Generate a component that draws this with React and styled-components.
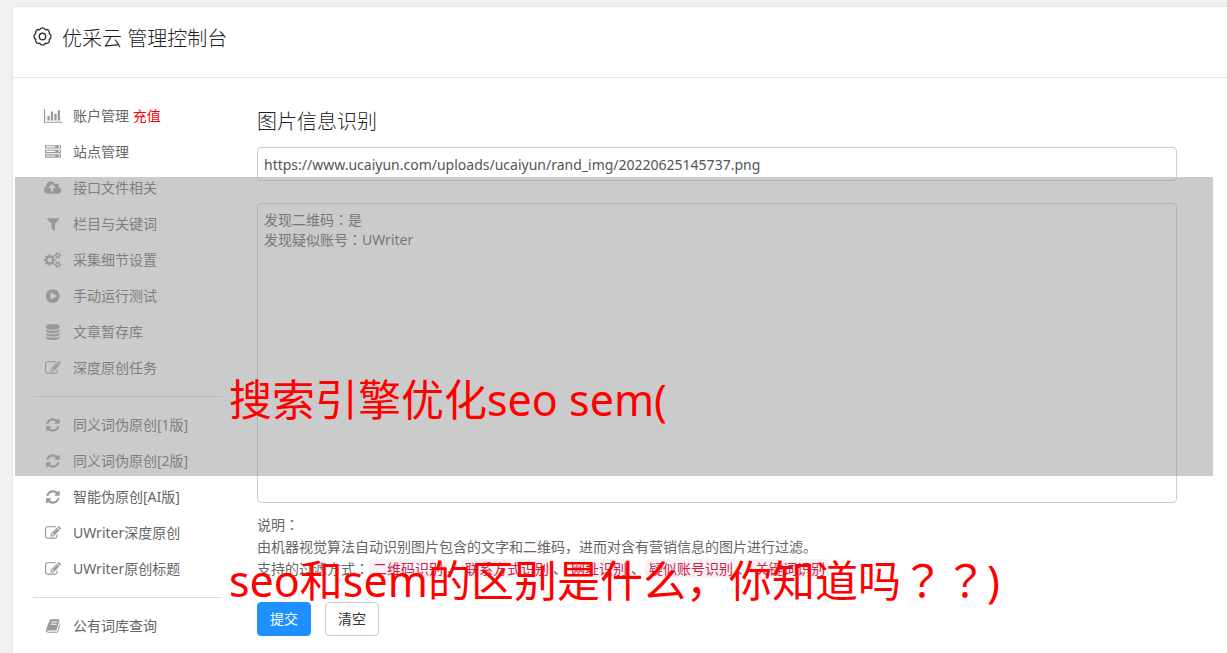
import React from "react";
import styled, { createGlobalStyle } from "styled-components";

const ICONS = {
	chart: {
		box: "0 0 2048 1792",
		d: "M640 896v512h-256v-512h256zm384-512v1024h-256v-1024h256zm1024 1152v128h-2048v-1536h128v1408h1920zm-640-896v768h-256v-768h256zm384-384v1152h-256v-1152h256z",
	},
	server: {
		box: "0 0 1792 1792",
		d: "M128 1408h1024v-128h-1024v128zm0-512h1024v-128h-1024v128zm1568 448q0-40-28-68t-68-28-68 28-28 68 28 68 68 28 68-28 28-68zm-1568-960h1024v-128h-1024v128zm1568 448q0-40-28-68t-68-28-68 28-28 68 28 68 68 28 68-28 28-68zm0-512q0-40-28-68t-68-28-68 28-28 68 28 68 68 28 68-28 28-68zm96 832v384h-1792v-384h1792zm0-512v384h-1792v-384h1792zm0-512v384h-1792v-384h1792z",
	},
	upload: {
		box: "-64 0 1920 1792",
		d: "M1216 864q0-14-9-23l-352-352q-9-9-23-9t-23 9l-351 351q-10 12-10 24 0 14 9 23t23 9h224v352q0 13 9.5 22.5t22.5 9.5h192q13 0 22.5-9.5t9.5-22.5v-352h224q13 0 22.5-9.5t9.5-22.5zm640 288q0 159-112.5 271.5t-271.5 112.5h-1088q-185 0-316.5-131.5t-131.5-316.5q0-130 70-240t188-165q-2-30-2-43 0-212 150-362t362-150q156 0 285.5 87t188.5 231q71-62 166-62 106 0 181 75t75 181q0 76-41 138 130 31 213.5 135.5t83.5 238.5z",
	},
	filter: {
		box: "192 0 1408 1792",
		d: "M1595 295q17 41-14 70l-493 493v742q0 42-39 59-13 5-25 5-27 0-45-19l-256-256q-19-19-19-45v-486l-493-493q-31-29-14-70 17-39 59-39h1280q42 0 59 39z",
	},
	cogs: {
		box: "-64 0 1920 1792",
		d: "M832 896q0-106-75-181t-181-75-181 75-75 181 75 181 181 75 181-75 75-181zm768 512q0-52-38-90t-90-38-90 38-38 90q0 53 37.5 90.5t90.5 37.5 90.5-37.5 37.5-90.5zm0-1024q0-52-38-90t-90-38-90 38-38 90q0 53 37.5 90.5t90.5 37.5 90.5-37.5 37.5-90.5zm-384 421v185q0 10-7 19.5t-16 10.5l-155 24q-11 35-32 76 34 48 90 115 7 11 7 20 0 12-7 19-23 30-82.5 89.5t-78.5 59.5q-11 0-21-7l-115-90q-37 19-77 31-11 108-23 155-7 24-30 24h-186q-11 0-20-7.5t-10-17.5l-23-153q-34-10-75-31l-118 89q-7 7-20 7-11 0-21-8-144-133-144-160 0-9 7-19 10-14 41-53t47-61q-23-44-35-82l-152-24q-10-1-17-9.5t-7-19.5v-185q0-10 7-19.5t16-10.5l155-24q11-35 32-76-34-48-90-115-7-11-7-20 0-12 7-20 22-30 82-89t79-59q11 0 21 7l115 90q34-18 77-32 11-108 23-154 7-24 30-24h186q11 0 20 7.5t10 17.5l23 153q34 10 75 31l118-89q8-7 20-7 11 0 21 8 144 133 144 160 0 8-7 19-12 16-42 54t-45 60q23 48 34 82l152 23q10 2 17 10.5t7 19.5zm640 533v140q0 16-149 31-12 27-30 52 51 113 51 138 0 4-4 7-122 71-124 71-8 0-46-47t-52-68q-20 2-30 2t-30-2q-14 21-52 68t-46 47q-2 0-124-71-4-3-4-7 0-25 51-138-18-25-30-52-149-15-149-31v-140q0-16 149-31 13-29 30-52-51-113-51-138 0-4 4-7 4-2 35-20t59-34 30-16q8 0 46 46.5t52 67.5q20-2 30-2t30 2q51-71 92-112l6-2q4 0 124 70 4 3 4 7 0 25-51 138 17 23 30 52 149 15 149 31zm0-1024v140q0 16-149 31-12 27-30 52 51 113 51 138 0 4-4 7-122 71-124 71-8 0-46-47t-52-68q-20 2-30 2t-30-2q-14 21-52 68t-46 47q-2 0-124-71-4-3-4-7 0-25 51-138-18-25-30-52-149-15-149-31v-140q0-16 149-31 13-29 30-52-51-113-51-138 0-4 4-7 4-2 35-20t59-34 30-16q8 0 46 46.5t52 67.5q20-2 30-2t30 2q51-71 92-112l6-2q4 0 124 70 4 3 4 7 0 25-51 138 17 23 30 52 149 15 149 31z",
	},
	play: {
		box: "128 0 1536 1792",
		d: "M896 128q209 0 385.5 103t279.5 279.5 103 385.5-103 385.5-279.5 279.5-385.5 103-385.5-103-279.5-279.5-103-385.5 103-385.5 279.5-279.5 385.5-103zm384 823q32-18 32-55t-32-55l-544-320q-31-19-64-1-32 19-32 56v640q0 37 32 56 16 8 32 8 17 0 32-9z",
	},
	database: {
		box: "128 0 1536 1792",
		d: "M896 768q237 0 443-43t325-127v170q0 69-103 128t-280 93.5-385 34.5-385-34.5-280-93.5-103-128v-170q119 84 325 127t443 43zm0 768q237 0 443-43t325-127v170q0 69-103 128t-280 93.5-385 34.5-385-34.5-280-93.5-103-128v-170q119 84 325 127t443 43zm0-384q237 0 443-43t325-127v170q0 69-103 128t-280 93.5-385 34.5-385-34.5-280-93.5-103-128v-170q119 84 325 127t443 43zm0-1152q208 0 385 34.5t280 93.5 103 128v128q0 69-103 128t-280 93.5-385 34.5-385-34.5-280-93.5-103-128v-128q0-69 103-128t280-93.5 385-34.5z",
	},
	edit: {
		box: "0 0 1792 1792",
		d: "M888 1184l116-116-152-152-116 116v56h96v96h56zm440-720q-16-16-33 1l-350 350q-17 17-1 33t33-1l350-350q17-17 1-33zm80 594v190q0 119-84.5 203.5t-203.5 84.5h-832q-119 0-203.5-84.5t-84.5-203.5v-832q0-119 84.5-203.5t203.5-84.5h832q63 0 117 25 15 7 18 23 3 17-9 29l-49 49q-14 14-32 8-23-6-45-6h-832q-66 0-113 47t-47 113v832q0 66 47 113t113 47h832q66 0 113-47t47-113v-126q0-13 9-22l64-64q15-15 35-7t20 29zm-96-738l288 288-672 672h-288v-288zm444 132l-92 92-288-288 92-92q28-28 68-28t68 28l152 152q28 28 28 68t-28 68z",
	},
	refresh: {
		box: "128 0 1536 1792",
		d: "M1639 1056q0 5-1 7-64 268-268 434.5t-478 166.5q-146 0-282.5-55t-243.5-157l-129 129q-19 19-45 19t-45-19-19-45v-448q0-26 19-45t45-19h448q26 0 45 19t19 45-19 45l-137 137q71 66 161 102t187 36q134 0 250-65t186-179q11-17 53-117 8-23 30-23h192q13 0 22.5 9.5t9.5 22.5zm25-800v448q0 26-19 45t-45 19h-448q-26 0-45-19t-19-45 19-45l138-138q-148-137-349-137-134 0-250 65t-186 179q-11 17-53 117-8 23-30 23h-199q-13 0-22.5-9.5t-9.5-22.5v-7q65-268 270-434.5t480-166.5q146 0 284 55.5t245 156.5l130-129q19-19 45-19t45 19 19 45z",
	},
	book: {
		box: "64 0 1664 1792",
		d: "M1703 478q40 57 18 129l-275 906q-19 64-76.5 107.5t-122.5 43.5h-923q-77 0-148.5-53.5t-99.5-131.5q-24-67-2-127 0-4 3-27t4-37q1-8-3-21.5t-3-19.5q2-11 8-21t16.5-23.5 16.5-23.5q23-38 45-91.5t30-91.5q3-10 .5-30t-.5-28q3-11 17-28t17-23q21-36 42-92t25-90q1-9-2.5-32t.5-28q4-13 22-30.5t22-22.5q19-26 42.5-84.5t27.5-96.5q1-8-3-25.5t-2-26.5q2-8 9-18t18-23 17-21q8-12 16.5-30.5t15-35 16-36 19.5-32 26.5-23.5 36-11.5 47.5 5.5l-1 3q38-9 51-9h761q74 0 114 56t18 130l-274 906q-36 119-71.5 153.5t-128.5 34.5h-869q-27 0-38 15-11 16-1 43 24 70 144 70h923q29 0 56-15.5t35-41.5l300-987q7-22 5-57 38 15 59 43zm-1064 2q-4 13 2 22.5t20 9.5h608q13 0 25.5-9.5t16.5-22.5l21-64q4-13-2-22.5t-20-9.5h-608q-13 0-25.5 9.5t-16.5 22.5zm-83 256q-4 13 2 22.5t20 9.5h608q13 0 25.5-9.5t16.5-22.5l21-64q4-13-2-22.5t-20-9.5h-608q-13 0-25.5 9.5t-16.5 22.5z",
	},
};

const MENU = [
	[
		{ icon: "chart", text: "账户管理", extra: "充值" },
		{ icon: "server", text: "站点管理" },
		{ icon: "upload", text: "接口文件相关" },
		{ icon: "filter", text: "栏目与关键词" },
		{ icon: "cogs", text: "采集细节设置" },
		{ icon: "play", text: "手动运行测试" },
		{ icon: "database", text: "文章暂存库" },
		{ icon: "edit", text: "深度原创任务" },
	],
	[
		{ icon: "refresh", text: "同义词伪原创[1版]" },
		{ icon: "refresh", text: "同义词伪原创[2版]" },
		{ icon: "refresh", text: "智能伪原创[AI版]" },
		{ icon: "edit", text: "UWriter深度原创" },
		{ icon: "edit", text: "UWriter原创标题" },
	],
	[{ icon: "book", text: "公有词库查询" }],
];

const FILTERS = ["二维码识别", "联系方式识别", "网址识别", "疑似账号识别", "关键词识别"];

// full-width marks that sit in the middle of their cell
const withMarks = (text) =>
	text.split(/([：？]+)/).map((part, index) =>
		index % 2 ? <Mark key={index} lang="zh-TW">{part}</Mark> : part
	);

const MenuIcon = ({ name }) => (
	<IconSlot>
		<svg viewBox={ICONS[name].box} height="16" fill="currentColor" aria-hidden="true">
			<path d={ICONS[name].d} />
		</svg>
	</IconSlot>
);

const GearIcon = () => (
	<svg width="19" height="19" viewBox="-10 -10 20 20" fill="none" stroke="currentColor" strokeWidth="1.4" strokeLinejoin="round" aria-hidden="true">
		<path d="M-2.9-7.02A3.1 3.1 0 0 1 2.9-7.02A3.1 3.1 0 0 1 7.02-2.9A3.1 3.1 0 0 1 7.02 2.9A3.1 3.1 0 0 1 2.9 7.02A3.1 3.1 0 0 1-2.9 7.02A3.1 3.1 0 0 1-7.02 2.9A3.1 3.1 0 0 1-7.02-2.9A3.1 3.1 0 0 1-2.9-7.02z" />
		<circle r="3.4" />
	</svg>
);

const App = () => {
	return (
		<>
			<GlobalStyle />
			<Page lang="zh-CN">
				<Card>
					<Header>
						<GearIcon />
						<Brand>优采云 管理控制台</Brand>
					</Header>
					<Columns>
						<Sidebar>
							{MENU.map((group, index) => (
								<Group key={index}>
									{group.map((item) => (
										<li key={item.text}>
											<MenuLink href="#">
												<MenuIcon name={item.icon} />
												<span>
													{item.text} {item.extra && <Extra>{item.extra}</Extra>}
												</span>
											</MenuLink>
										</li>
									))}
								</Group>
							))}
						</Sidebar>
						<Content>
							<Title>图片信息识别</Title>
							<UrlInput
								type="text"
								aria-label="图片地址"
								defaultValue="https://www.ucaiyun.com/uploads/ucaiyun/rand_img/20220625145737.png"
							/>
							<ResultBox
								lang="zh-TW"
								aria-label="识别结果"
								defaultValue={"发现二维码：是\n发现疑似账号：UWriter"}
							/>
							<Notes>
								{withMarks("说明：")}
								<br />
								由机器视觉算法自动识别图片包含的文字和二维码，进而对含有营销信息的图片进行过滤。
								<br />
								{withMarks("支持的过滤方式：")}
								{FILTERS.map((filter, index) => (
									<React.Fragment key={filter}>
										{index > 0 && "、"}
										<Tag>{filter}</Tag>
									</React.Fragment>
								))}
							</Notes>
							<Buttons>
								<Button $primary type="submit">提交</Button>
								<Button type="reset">清空</Button>
							</Buttons>
						</Content>
					</Columns>
				</Card>
				<Shade />
				<Caption $top={370}>搜索引擎优化seo sem(</Caption>
				<Caption $top={551}>{withMarks("seo和sem的区别是什么，你知道吗？？)")}</Caption>
			</Page>
		</>
	);
};

export default App;

const GlobalStyle = createGlobalStyle`
	* {
		box-sizing: border-box;
	}

	body {
		margin: 0;
		background-color: #f1f1f1;
		color: #666;
		font-family: "Noto Sans", "Noto Sans CJK SC", sans-serif;
		font-size: 14px;
		line-height: 20px;
	}

	input, textarea, button {
		font: inherit;
	}
`;

const Page = styled.div`
	position: relative;
	padding: 6px 0 0 12px;
`;

const Card = styled.div`
	min-height: calc(100vh - 6px);
	background-color: #fff;
	border: 1px solid #e5e5e5;
	border-width: 1px 0 0 1px;
	border-radius: 4px 0 0 0;
`;

const Header = styled.header`
	display: flex;
	align-items: flex-start;
	gap: 10px;
	height: 71px;
	padding: 20px;
	border-bottom: 1px solid #e5e5e5;
	color: #333;
`;

const Brand = styled.h1`
	margin: 0;
	color: #222;
	font-size: 20px;
	font-weight: 300;
	line-height: 24px;
`;

const Columns = styled.div`
	display: flex;
	gap: 35px;
	padding: 20px 50px 0 20px;
`;

const Sidebar = styled.nav`
	flex: 0 0 189px;
`;

const Group = styled.ul`
	list-style: none;
	margin: 0;
	padding: 0;

	& + & {
		margin-top: 10px;
		padding-top: 10px;
		border-top: 1px solid #ddd;
	}
`;

const MenuLink = styled.a`
	display: flex;
	align-items: center;
	gap: 10px;
	height: 36px;
	padding-left: 10px;
	color: #666;
	text-decoration: none;
`;

const IconSlot = styled.span`
	display: flex;
	justify-content: center;
	width: 20px;
	color: #999;
`;

const Extra = styled.span`
	color: #f00;
`;

const Content = styled.main`
	flex: 1;
	min-width: 0;
	display: flex;
	flex-direction: column;
`;

const Title = styled.h2`
	margin: 10px 0 12px;
	color: #222;
	font-size: 20px;
	font-weight: 300;
	line-height: 27px;
`;

const UrlInput = styled.input`
	height: 34px;
	padding: 6px;
	border: 1px solid #ccc;
	border-radius: 4px;
	background-color: #fff;
	color: #555;
`;

const ResultBox = styled.textarea`
	height: 300px;
	margin-top: 22px;
	padding: 6px;
	border: 1px solid #ccc;
	border-radius: 4px;
	background-color: #fff;
	color: #555;
	font-family: "Noto Sans", "Noto Sans CJK TC", sans-serif;
	resize: none;
`;

const Notes = styled.p`
	margin: 11px 0 22px;
	line-height: 22px;
`;

const Mark = styled.span`
	font-family: "Noto Sans CJK TC", sans-serif;
	line-height: 0;
`;

const Tag = styled.code`
	padding: 0 4px;
	border-radius: 4px;
	background-color: #f9f2f4;
	color: #c7254e;
	font-family: inherit;
`;

const Buttons = styled.div`
	display: flex;
	gap: 14px;
`;

const Button = styled.button`
	height: 34px;
	padding: 0 12px;
	border: 1px solid ${({ $primary }) => ($primary ? "#1e90ff" : "#ccc")};
	border-radius: 4px;
	background-color: ${({ $primary }) => ($primary ? "#1e90ff" : "#fff")};
	color: ${({ $primary }) => ($primary ? "#fff" : "#333")};
`;

const Shade = styled.div`
	position: absolute;
	top: 177px;
	left: 15px;
	right: 14px;
	height: 299px;
	background-color: rgba(151, 151, 151, 0.5);
	pointer-events: none;
`;

const Caption = styled.p`
	position: absolute;
	top: ${({ $top }) => $top}px;
	left: 229px;
	margin: 0;
	color: #f00;
	font-size: 43px;
	line-height: 60px;
	white-space: nowrap;
	pointer-events: none;
`;
